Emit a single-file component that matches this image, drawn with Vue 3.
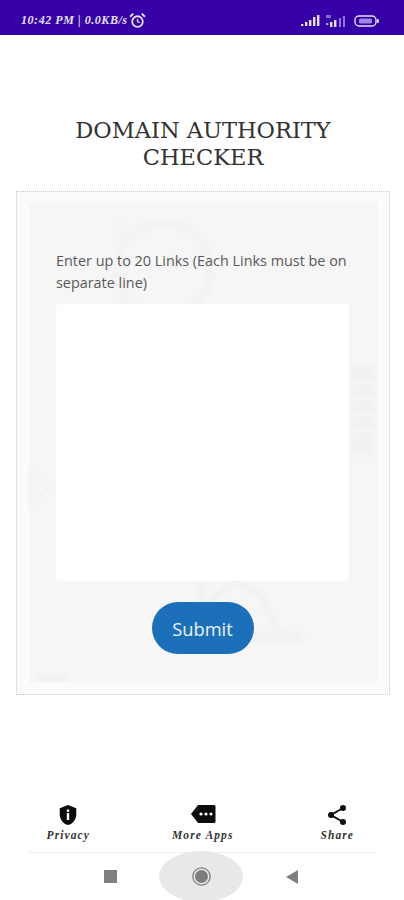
<template>
  <div class="app">
    <!-- status bar -->
    <div class="status">
      <div class="status-left">
        <span>10:42 PM | 0.0KB/s</span>
        <svg class="alarm" viewBox="0 0 16 16" width="17" height="17">
          <circle cx="8" cy="9" r="5" fill="none" stroke="#e8e0f8" stroke-width="1.7" />
          <path d="M8 6.500V9l2 1" fill="none" stroke="#e8e0f8" stroke-width="1.200" />
          <path d="M1 4.500 4 1.500M15 4.500 12 1.500" stroke="#e8e0f8" stroke-width="1.800" />
        </svg>
      </div>
      <div class="status-right">
        <svg viewBox="0 0 19 11" width="19" height="11">
          <g fill="#e8e0f8">
            <rect x="0" y="9" width="2.400" height="2" />
            <rect x="4" y="7" width="2.400" height="4" />
            <rect x="8" y="5" width="2.400" height="6" />
            <rect x="12" y="2" width="2.400" height="9" />
            <rect x="16" y="0" width="2.400" height="11" />
          </g>
        </svg>
        <svg viewBox="0 0 22 12" width="22" height="12">
          <g fill="#e8e0f8">
            <rect x="0" y="0" width="5" height="3" opacity=".45" />
            <rect x="0" y="8" width="2.400" height="2" opacity=".7" />
            <rect x="4" y="7" width="2.400" height="5" />
            <rect x="8" y="5" width="2.400" height="7" />
          </g>
          <g fill="#8f76d8">
            <rect x="13" y="3" width="2" height="9" />
            <rect x="17" y="1" width="2" height="11" />
          </g>
        </svg>
        <svg viewBox="0 0 26 12" width="26" height="12">
          <rect x="1" y="1" width="21" height="10" rx="4" fill="none" stroke="#e8e0f8" stroke-width="1.400" />
          <rect x="5" y="3.500" width="13" height="5" rx="1.500" fill="#9d88e2" />
          <rect x="23" y="4" width="1.800" height="4" rx=".8" fill="#e8e0f8" />
        </svg>
      </div>
    </div>

    <main class="content">
      <h1 class="title">DOMAIN AUTHORITY CHECKER</h1>

      <section class="card">
        <div class="panel">
          <!-- faint artwork behind the form -->
          <svg class="watermark" viewBox="0 0 349 479" width="349" height="479">
            <g fill="none" stroke="#f3f3f3" stroke-width="9">
              <path d="M91 17V95" />
              <circle cx="134" cy="67" r="47" />
            </g>
            <rect x="323" y="164" width="23" height="88" fill="#f1f1f1" />
            <g fill="#f6f6f6">
              <rect x="323" y="178" width="23" height="3" />
              <rect x="323" y="194" width="23" height="3" />
              <rect x="323" y="210" width="23" height="3" />
              <rect x="323" y="226" width="23" height="3" />
            </g>
            <path d="M2 268 19 285 2 303Z" fill="none" stroke="#f2f2f2" stroke-width="3" />
            <path d="M172 380V405L205 378 232 392 250 432" fill="none" stroke="#f1f1f1" stroke-width="6" />
            <rect x="180" y="428" width="94" height="12" rx="5" fill="#f2f2f2" />
            <rect x="9" y="471" width="28" height="7" fill="#f1f1f1" />
          </svg>

          <label class="label" for="links">Enter up to 20 Links (Each Links must be on separate line)</label>
          <textarea id="links" class="links"></textarea>
          <button class="submit" type="button">Submit</button>
        </div>
      </section>
    </main>

    <!-- bottom actions -->
    <nav class="actions">
      <a class="action">
        <svg viewBox="0 0 24 24" width="22" height="22">
          <path d="M12 1 3 4.500v6.600c0 5.600 3.800 10.500 9 11.900 5.200-1.400 9-6.300 9-11.900V4.500Z" fill="#0c0c0c" />
          <rect x="10.700" y="10" width="2.600" height="7.500" fill="#fff" />
          <rect x="10.700" y="6" width="2.600" height="2.600" fill="#fff" />
        </svg>
        <span>Privacy</span>
      </a>
      <a class="action">
        <svg viewBox="0 0 26 22" width="26" height="22">
          <path d="M8 1h16a1.500 1.500 0 0 1 1.500 1.500v15A1.500 1.500 0 0 1 24 19H8L1 10Z" fill="#0c0c0c" />
          <circle cx="11" cy="10" r="1.600" fill="#fff" />
          <circle cx="16" cy="10" r="1.600" fill="#fff" />
          <circle cx="21" cy="10" r="1.600" fill="#fff" />
        </svg>
        <span>More Apps</span>
      </a>
      <a class="action">
        <svg viewBox="0 0 22 22" width="22" height="22">
          <path d="M17 4 5 11l12 7" fill="none" stroke="#0c0c0c" stroke-width="2" />
          <circle cx="17" cy="4" r="3" fill="#0c0c0c" />
          <circle cx="5" cy="11" r="3" fill="#0c0c0c" />
          <circle cx="17" cy="18" r="3" fill="#0c0c0c" />
        </svg>
        <span>Share</span>
      </a>
    </nav>
    <div class="divider"></div>

    <!-- system navigation -->
    <div class="sysnav">
      <span class="sys-square"></span>
      <span class="sys-home"><i></i></span>
      <span class="sys-back"></span>
    </div>
  </div>
</template>

<script setup>
</script>

<style>
html, body { margin: 0; background: #fff; }
</style>

<style scoped>
.app {
  width: 404px;
  height: 900px;
  overflow: hidden;
  display: flex;
  flex-direction: column;
  font-family: 'Open Sans', sans-serif;
  background: #fff;
}

.status {
  height: 35px;
  flex: none;
  box-sizing: border-box;
  padding: 6px 24px 0 21px;
  display: flex;
  align-items: center;
  justify-content: space-between;
  background: #3500a8;
  color: #e8e0f8;
}
.status-left {
  display: flex;
  align-items: center;
  gap: 1px;
  font-family: 'Liberation Serif', serif;
  font-style: italic;
  font-weight: 700;
  font-size: 12px;
  letter-spacing: 0.55px;
}
.status-right { display: flex; align-items: center; gap: 6px; }

.content {
  flex: 1;
  padding: 82px 14px 0 16px;
}
.title {
  margin: 0 auto;
  width: 300px;
  font-family: 'DejaVu Serif', serif;
  font-weight: 400;
  font-size: 22.500px;
  line-height: 27px;
  text-align: center;
  color: #333;
}
.card {
  margin-top: 20px;
  box-sizing: border-box;
  height: 504px;
  padding: 11px 11px 11px 12px;
  border: 1px dotted #cacaca;
  background: #fbfbfb;
}
.panel {
  position: relative;
  height: 100%;
  box-sizing: border-box;
  padding: 47px 29px 0 27px;
  display: flex;
  flex-direction: column;
  background: #f6f6f6;
}
.watermark { position: absolute; left: 0; top: 0; filter: blur(1.500px); }
.label {
  position: relative;
  font-size: 14.400px;
  line-height: 22px;
  color: #595959;
}
.links {
  position: relative;
  display: block;
  box-sizing: border-box;
  width: 293px;
  height: 277px;
  margin-top: 10px;
  padding: 8px;
  border: 1px solid #fdfdfd;
  border-radius: 2px;
  background: #fff;
  resize: none;
}
.submit {
  position: relative;
  align-self: center;
  width: 102px;
  height: 52px;
  margin-top: 21px;
  border: none;
  border-radius: 26px;
  background: #1c6fb9;
  color: #eef5fb;
  font-family: inherit;
  font-size: 18.300px;
}

.actions {
  flex: none;
  height: 48px;
  padding-left: 1px;
  display: grid;
  grid-template-columns: repeat(3, 134.500px);
}
.action {
  display: flex;
  flex-direction: column;
  align-items: center;
  gap: 3px;
  font-family: 'Liberation Serif', serif;
  font-style: italic;
  font-weight: 700;
  font-size: 11.500px;
  letter-spacing: 1.100px;
  line-height: 13px;
  color: #333;
}
.divider {
  flex: none;
  height: 1px;
  margin: 0 28px;
  background: #f1f1f1;
}

.sysnav {
  flex: none;
  height: 47px;
  padding-right: 2px;
  display: flex;
  align-items: center;
  justify-content: center;
  background: #fff;
}
.sys-square { width: 13px; height: 13px; background: #808080; }
.sys-home {
  width: 84px;
  height: 51px;
  margin: 0 43px 0 42px;
  display: flex;
  align-items: center;
  justify-content: center;
  border-radius: 50%;
  background: #e8e8e8;
}
.sys-home i {
  width: 13px;
  height: 13px;
  border-radius: 50%;
  background: #7d7d7d;
  box-shadow: 0 0 0 1.500px #e8e8e8, 0 0 0 2.800px #7d7d7d;
}
.sys-back {
  width: 0;
  height: 0;
  border-top: 7px solid transparent;
  border-bottom: 7px solid transparent;
  border-right: 12px solid #808080;
}
</style>
